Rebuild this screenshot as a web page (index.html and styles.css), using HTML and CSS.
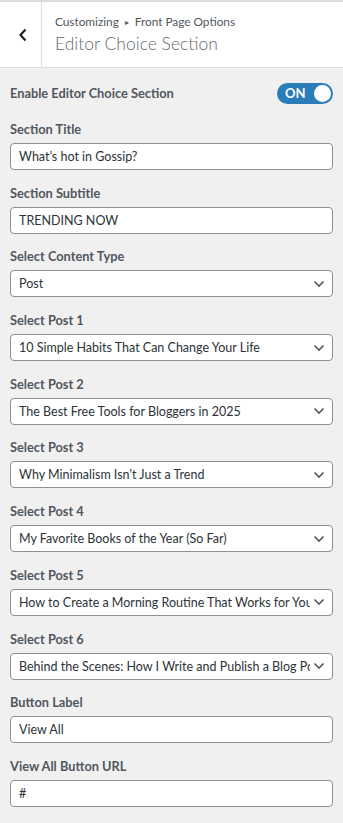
FILE: index.html
```html
<!DOCTYPE html>
<html lang="en">
  <head>
    <meta charset="utf-8" />
    <meta name="viewport" content="width=device-width, initial-scale=1" />
    <title>Customizing | Editor Choice Section</title>
    <link rel="stylesheet" href="styles.css">
  </head>
  <body>
    <div class="panel">
        <!-- section header with back arrow -->
        <div class="head">
            <button class="back" type="button" aria-label="Back">
                <svg width="10" height="14" viewBox="0 0 10 14"><path d="M7.5 1.5 2.5 7l5 5.5" fill="none" stroke="#1d2327" stroke-width="2.2"/></svg>
            </button>
            <div class="titles">
                <span class="crumb">Customizing <span class="sep">&#9656;</span> Front Page Options</span>
                <h2>Editor Choice Section</h2>
            </div>
        </div>

        <div class="controls">
            <div class="row toggle-row">
                <span class="lbl">Enable Editor Choice Section</span>
                <span class="toggle"><span class="on">ON</span><span class="knob"></span></span>
            </div>

            <div class="field">
                <label class="lbl" for="title">Section Title</label>
                <input type="text" id="title" value="What’s hot in Gossip?">
            </div>
            <div class="field">
                <label class="lbl" for="subtitle">Section Subtitle</label>
                <input type="text" id="subtitle" value="TRENDING NOW">
            </div>
            <div class="field">
                <label class="lbl" for="ctype">Select Content Type</label>
                <select id="ctype"><option>Post</option></select>
            </div>
            <div class="field">
                <label class="lbl" for="p1">Select Post 1</label>
                <select id="p1"><option>10 Simple Habits That Can Change Your Life</option></select>
            </div>
            <div class="field">
                <label class="lbl" for="p2">Select Post 2</label>
                <select id="p2"><option>The Best Free Tools for Bloggers in 2025</option></select>
            </div>
            <div class="field">
                <label class="lbl" for="p3">Select Post 3</label>
                <select id="p3"><option>Why Minimalism Isn’t Just a Trend</option></select>
            </div>
            <div class="field">
                <label class="lbl" for="p4">Select Post 4</label>
                <select id="p4"><option>My Favorite Books of the Year (So Far)</option></select>
            </div>
            <div class="field">
                <label class="lbl" for="p5">Select Post 5</label>
                <select id="p5"><option>How to Create a Morning Routine That Works for You</option></select>
            </div>
            <div class="field">
                <label class="lbl" for="p6">Select Post 6</label>
                <select id="p6"><option>Behind the Scenes: How I Write and Publish a Blog Post</option></select>
            </div>
            <div class="field">
                <label class="lbl" for="blabel">Button Label</label>
                <input type="text" id="blabel" value="View All">
            </div>
            <div class="field">
                <label class="lbl" for="burl">View All Button URL</label>
                <input type="text" id="burl" value="#">
            </div>
        </div>
    </div>
  </body>
</html>
```

FILE: styles.css
```css
body{
    margin: 0;
    background-color: #f0f0f1;
    font-family: Lato, "Noto Sans", sans-serif;
    color: #50575e;
}

.head{
    display: flex;
    background-color: #fff;
    border-top: 2px solid #dcdcde;
    border-bottom: 1px solid #dcdcde;
    height: 65px;
}

.back{
    width: 42px;
    border: 0;
    border-right: 1px solid #dcdcde;
    background: #fff;
    padding: 0 0 0 4px;
    display: flex;
    align-items: center;
    justify-content: center;
}

.titles{
    padding: 11px 0 0 13px;
}

.crumb{
    display: block;
    font-size: 11.8px;
    line-height: 18px;
    color: #50575e;
}

.crumb .sep{
    font-size: 8px;
    padding: 0 3px;
    vertical-align: 1px;
}

.titles h2{
    margin: 0;
    font-size: 17.5px;
    font-weight: 300;
    line-height: 26px;
    color: #646970;
}

.controls{
    padding: 13px 10px 0 10px;
}

.lbl{
    display: block;
    font-size: 12.8px;
    font-weight: 700;
    line-height: 20px;
    color: #50575e;
}

.toggle-row{
    display: flex;
    justify-content: space-between;
    align-items: center;
    height: 24px;
    margin-bottom: 14px;
}

.toggle{
    display: flex;
    align-items: center;
    justify-content: space-between;
    width: 56px;
    height: 21px;
    box-sizing: border-box;
    padding: 0 2px 0 8px;
    border-radius: 11px;
    background-color: #2a7db8;
}

.toggle .on{
    color: #fff;
    font-size: 13px;
    font-weight: 700;
    line-height: 1;
}

.toggle .knob{
    width: 17px;
    height: 17px;
    border-radius: 50%;
    background: #fff;
}

.field{
    margin-bottom: 12.7px;
}

.field .lbl{
    margin-bottom: 4px;
}

.field input,
.field select{
    display: block;
    width: 100%;
    box-sizing: border-box;
    height: 27px;
    margin: 0;
    border: 1px solid #8c8f94;
    border-radius: 4px;
    background-color: #fff;
    font-family: inherit;
    font-size: 12.5px;
    color: #2c3338;
    padding: 0 8px;
}

.field select{
    appearance: none;
    padding-right: 22px;
    background-image: url("data:image/svg+xml,%3Csvg xmlns='http://www.w3.org/2000/svg' width='12' height='8' viewBox='0 0 12 8'%3E%3Cpath d='M1.5 1.5 6 6l4.5-4.5' fill='none' stroke='%2350575e' stroke-width='1.6'/%3E%3C/svg%3E");
    background-repeat: no-repeat;
    background-position: right 7px center;
    text-overflow: clip;
}
```
